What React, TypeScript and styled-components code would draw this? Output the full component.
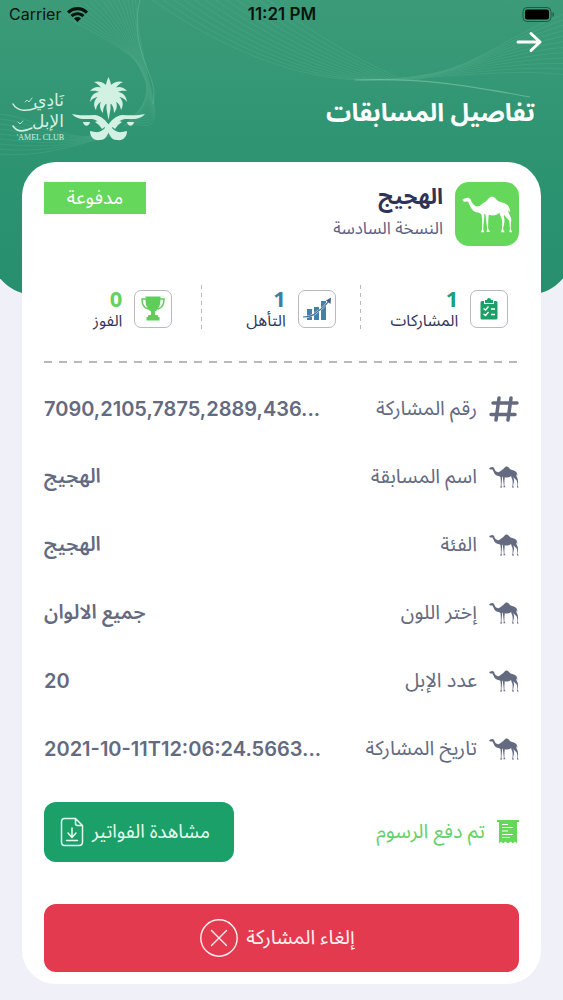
import React from "react";
import styled, { createGlobalStyle } from "styled-components";

const sans = `Inter, "Noto Sans", "DejaVu Sans", sans-serif`;
const arabic = `"Noto Sans Arabic", "Noto Sans", "DejaVu Sans", sans-serif`;

const GlobalStyle = createGlobalStyle`
  *, *::before, *::after { box-sizing: border-box; }
  body { margin: 0; background: #f0f0f8; font-family: ${arabic}; color: #646a80; }
  h1, h2, p, dl, dd, dt { margin: 0; font-weight: 400; }
  svg { display: block; flex: none; }
`;

const Page = styled.div`
  position: relative;
  overflow: hidden;
  padding-bottom: 17px;
`;

const Backdrop = styled.div`
  position: absolute;
  top: 0;
  left: -10px;
  right: -10px;
  height: 295px;
  border-radius: 0 0 45px 45px;
  background: linear-gradient(#3c9b79, #2e9472 50%, #268f6e);
  overflow: hidden;
`;

const Header = styled.header`
  position: relative;
  height: 162px;
`;

const StatusBar = styled.div`
  display: grid;
  grid-template-columns: 1fr auto 1fr;
  align-items: center;
  height: 28px;
  padding: 0 8px 0 9px;
  font: 400 16px/28px ${sans};
  color: #08130f;
`;

const Carrier = styled.div`
  display: flex;
  align-items: center;
  gap: 6px;
`;

const Clock = styled.div`
  font-size: 17px;
  font-weight: 600;
`;

const BatterySlot = styled.div`
  justify-self: end;
`;

const BackButton = styled.button`
  display: block;
  margin: 0 20px;
  padding: 0;
  border: 0;
  background: none;
  color: #fff;
  cursor: pointer;
`;

const TitleRow = styled.div`
  display: flex;
  justify-content: space-between;
  align-items: center;
  height: 66px;
  margin-top: 20px;
  padding: 0 28px 0 12px;
`;

const Title = styled.h1`
  padding-top: 8px;
  font-size: 25px;
  line-height: 36px;
  font-weight: 700;
  color: #fff;
`;

const Brand = styled.div`
  display: flex;
  align-items: center;
  gap: 8px;
  color: #d3f1e3;
`;

const Wordmark = styled.div`
  position: relative;
  display: flex;
  flex-direction: column;
  width: 52px;
  padding-top: 16px;
  font: 400 17px/21px "DejaVu Sans", sans-serif;
`;

const Flourish = styled.svg`
  position: absolute;
  left: 0;
  top: 20px;
`;

const WordmarkLatin = styled.span`
  direction: ltr;
  font: 400 8px/12px "Liberation Serif", serif;
  text-align: right;
  white-space: nowrap;
`;

const Card = styled.main`
  position: relative;
  margin: 0 22px;
  padding: 20px 22px 12px;
  border-radius: 34px;
  background: #fff;
`;

const Summary = styled.section`
  display: flex;
  align-items: flex-start;
  gap: 12px;
  height: 64px;
`;

const CamelTile = styled.div`
  display: grid;
  place-items: center;
  width: 64px;
  height: 64px;
  border-radius: 14px;
  background: #65d75b;
  color: #fff;
`;

const SummaryText = styled.div`
  flex: 1;
`;

const Name = styled.h2`
  font-size: 22px;
  line-height: 30px;
  font-weight: 700;
  color: #2e3358;
`;

const Edition = styled.p`
  font-size: 17px;
  line-height: 34px;
  color: #5c6184;
`;

const Badge = styled.span`
  width: 102px;
  background: #65d75b;
  color: #fff;
  font-size: 19px;
  line-height: 32px;
  text-align: center;
`;

const Stats = styled.section`
  display: grid;
  grid-template-columns: repeat(3, 1fr);
  margin-top: 39px;
`;

const dash = "#b9b9bd";

const Stat = styled.div`
  display: flex;
  align-items: center;
  justify-content: center;
  gap: 12px;
  height: 47px;
  padding-left: 19px;
  & + & {
    background: repeating-linear-gradient(${dash} 0 4px, transparent 4px 8px) right top / 1px 100% no-repeat;
  }
`;

const StatIcon = styled.div`
  display: grid;
  place-items: center;
  width: 38px;
  height: 38px;
  border: 1px solid #b9b9c0;
  border-radius: 7px;
`;

const StatNumber = styled.div<{ $color: string }>`
  font: 700 22px/24px "Noto Sans", sans-serif;
  color: ${(p) => p.$color};
`;

const StatLabel = styled.div`
  font-size: 16px;
  line-height: 22px;
  color: #33365a;
`;

const Divider = styled.div`
  height: 2px;
  margin: 29px 0 12px;
  background: repeating-linear-gradient(to right, ${dash} 0 8px, transparent 8px 15px);
`;

const Details = styled.dl``;

const Row = styled.div`
  display: flex;
  align-items: center;
  justify-content: space-between;
  height: 68px;
`;

const Term = styled.dt`
  display: flex;
  align-items: center;
  gap: 12px;
  font-size: 20px;
`;

const Value = styled.dd<{ $latin?: boolean }>`
  direction: ${(p) => (p.$latin ? "ltr" : "rtl")};
  font-family: ${(p) => (p.$latin ? sans : arabic)};
  font-size: 20px;
  font-weight: 600;
`;

const Payment = styled.section`
  display: flex;
  align-items: center;
  justify-content: space-between;
  margin: 19px 0 42px;
`;

const Paid = styled.p`
  display: flex;
  align-items: center;
  gap: 12px;
  font-size: 20px;
  color: #65d16a;
`;

const InvoiceButton = styled.button`
  display: flex;
  align-items: center;
  gap: 8px;
  width: 190px;
  height: 60px;
  padding: 0 24px;
  border: 0;
  border-radius: 12px;
  background: #1ba06a;
  color: #e4fbef;
  font: 400 19px/24px ${arabic};
  white-space: nowrap;
  cursor: pointer;
`;

const CancelButton = styled.button`
  display: flex;
  align-items: center;
  justify-content: center;
  gap: 8px;
  width: 100%;
  height: 68px;
  padding: 0 12px 0 4px;
  border: 0;
  border-radius: 12px;
  background: #e43a50;
  color: #fff0f2;
  font: 400 20px/26px ${arabic};
  cursor: pointer;
`;

const range = (n: number) => Array.from({ length: n }, (_, i) => i);

const Waves = () => (
  <svg width="573" height="162" viewBox="-10 0 573 162" fill="none" stroke="#8fd6b5" strokeWidth="0.7">
    <g opacity="0.2">
      {range(12).map((i) => (
        <path key={i} d={`M${140 + i * 9} ${-2 - i}C${190 + i * 8} ${34 - i * 2} ${270 + i * 4} ${78 - i * 3} ${350 + i * 4} 80`} />
      ))}
      {range(12).map((i) => (
        <path key={i} d={`M${350 + i * 5} 80C${430 + i * 3} ${80 - i} 500 ${66 - i * 3} 565 ${76 - i * 6}`} />
      ))}
      {range(16).map((i) => (
        <path key={i} d={`M${50 + i * 5} ${14 - i * 2}C${80 + i * 3} ${30 - i * 2} ${112 + i} ${48 - i} ${126 + i} ${60 + i * 2}S${140 - i} ${100 + i} ${128 - i} ${112 + i}`} />
      ))}
      {range(9).map((i) => (
        <path key={i} d={`M-10 ${114 + i * 5}C30 ${118 + i * 5} 70 ${152 - i} 100 ${128 + i}`} />
      ))}
    </g>
    <path d="M130 0C122 30 132 56 140 76C144 86 145 94 143 104" opacity="0.4" />
    <path d="M345 80C410 78 450 84 520 97" opacity="0.5" strokeWidth="1.2" />
  </svg>
);

const Camel = ({ width }: { width: number }) => (
  <svg width={width} height={Math.round(width * 0.73)} viewBox="428 107 154 112" fill="currentColor" aria-hidden="true">
    <path d="M429 118C433 114 438 115 441 113C446 111 451 113 454 117C457 128 464 138 475 139C483 138 489 130 496 126C504 122 508 111 516 109C525 107 531 118 539 124C549 127 563 129 569 139C572 145 573 150 574 156C570 153 569 150 568 149C567 160 575 166 577 179L575 207L580 217L571 217L573 207L571 182C565 174 559 171 555 164L554 170C560 182 553 195 552 208L557 217L546 217L549 206C549 194 551 184 547 174C544 167 543 163 541 158C531 168 519 167 509 164C507 177 507 191 507 206L513 216L502 216L504 205L501 181L499 163L495 161C496 178 492 192 492 207L495 217L485 217L489 207C488 193 490 180 487 164C484 158 478 157 471 156C457 153 453 139 446 124C440 124 435 126 431 122Z" />
  </svg>
);

const Emblem = () => (
  <svg width="73" height="64" viewBox="0 0 73 64" fill="currentColor" aria-hidden="true">
    <path d="M34.500 17L38.500 17L38.500 32L36.500 43L34.500 32Z" />
    {[
      "M33 18C33 11 34 5 36.500 0C39 5 40 11 40 18Z",
      "M34 20C30 13 29 8 22 5C29 3 36 7 39 16Z",
      "M39 20C43 13 44 8 51 5C44 3 37 7 34 16Z",
      "M35 22C30 15 25 13 18 14C24 7 33 10 38 18Z",
      "M38 22C43 15 48 13 55 14C49 7 40 10 35 18Z",
      "M36 24C30 18 22 19 18 25C19 14 30 12 38 18Z",
      "M37 24C43 18 51 19 55 25C54 14 43 12 35 18Z",
      "M37 25C30 22 25 26 24 33C19 25 25 16 37 17Z",
      "M36 25C43 22 48 26 49 33C54 25 48 16 36 17Z",
      "M37 25C34 26 31 29 31 36C25 29 29 20 37 18Z",
      "M36 25C39 26 42 29 42 36C48 29 44 20 36 18Z",
    ].map((d) => (
      <path key={d} d={d} />
    ))}
    <circle cx="36.500" cy="19" r="8" />
    {[undefined, "matrix(-1 0 0 1 73 0)"].map((t, i) => (
      <g key={i} transform={t}>
        <path d="M0 37C8 39 16 38 23 38C30 39 34 44 37 48C41 52 44 56 50 55L55 54C55 60 51 64 45 63C39 63 38 58 35 53C31 48 26 43 20 42C13 42 5 43 0 37Z" />
        <path d="M11 45H18C17 50 12 50 11 45Z" />
        <path d="M39 49C41 44 46 43 50 45L46 48L43 52Z" />
      </g>
    ))}
  </svg>
);

const WifiIcon = () => (
  <svg width="21" height="15" viewBox="0 0 21 15" fill="currentColor" aria-hidden="true">
    <path d="M0 4.4C6-1.4 15-1.4 21 4.4L18.8 6.7C14 2.2 7 2.2 2.200 6.700Z" />
    <path d="M3.500 7.900C7.500 4.200 13.500 4.200 17.500 7.900L15.300 10.200C12.500 7.700 8.500 7.700 5.700 10.200Z" />
    <path d="M7 11.400C9 9.600 12 9.600 14 11.400L10.500 15Z" />
  </svg>
);

const BatteryIcon = () => (
  <svg width="33" height="15" viewBox="0 0 33 15" aria-hidden="true">
    <rect x="1" y="0.5" width="28" height="14" rx="4" fill="none" stroke="#1d5b45" />
    <rect x="3" y="2.500" width="24" height="10" rx="2" fill="#000" />
    <path d="M30.500 5C32.500 6 32.500 9 30.500 10Z" fill="#1d5b45" />
  </svg>
);

const ArrowIcon = () => (
  <svg width="28" height="28" viewBox="0 0 28 28" fill="none" stroke="currentColor" strokeWidth="3" strokeLinecap="round" strokeLinejoin="round" aria-hidden="true">
    <path d="M3 14H25M16 5.500L25 14L16 22.500" />
  </svg>
);

const ClipboardIcon = () => (
  <svg width="18" height="22" viewBox="0 0 18 22" aria-hidden="true">
    <path d="M2 3H4V6H14V3H16Q17.500 3 17.500 4.500V20Q17.500 21.500 16 21.500H2Q.5 21.500.5 20V4.500Q.5 3 2 3Z" fill="#1ca068" />
    <path d="M5 2H7Q7 0 9 0T11 2H13V5H5Z" fill="#1ca068" />
    <path d="M3.500 10.500L5.500 12L8.500 8.500M3.500 16L5.500 17.500L8.500 14M11 11H15M11 16.500H15" fill="none" stroke="#fff" strokeWidth="1.300" />
  </svg>
);

const GrowthIcon = () => (
  <svg width="30" height="24" viewBox="0 0 30 24" aria-hidden="true">
    <path d="M5 12H10V23H5ZM12 10H17V23H12ZM19 4H24V23H19Z" fill="#4382a8" />
    <path d="M1 20C9 20 12 18 15 15C20 12 23 9 27 4" fill="none" stroke="#fff" strokeWidth="2" />
    <path d="M1 20C9 20 12 18 15 15C20 12 23 9 27 4" fill="none" stroke="#3c6f96" strokeWidth="1.200" />
    <path d="M29 0.500L28.500 7L24 3.500Z" fill="#3c5f8a" />
  </svg>
);

const TrophyIcon = () => (
  <svg width="24" height="25" viewBox="0 0 24 25" aria-hidden="true">
    <path d="M4.500 0.500H19.500V3C19.500 10 17 14 14 15.500V19H16Q17 19 17 20V21H18.500V24.500H5.500V21H7V20Q7 19 8 19H10V15.500C7 14 4.500 10 4.500 3Z" fill="#5dcf58" />
    <path d="M5 3H1C1 9 3 12 7 13M19 3H23C23 9 21 12 17 13" fill="none" stroke="#5dcf58" strokeWidth="1.500" />
  </svg>
);

const HashIcon = () => (
  <svg width="30" height="28" viewBox="0 0 30 28" fill="none" stroke="currentColor" strokeWidth="3.500" strokeLinecap="round" aria-hidden="true">
    <path d="M10 3L7 25M22 3L19 25M4 8H28M2 19.500H26" />
  </svg>
);

const ReceiptIcon = () => (
  <svg width="22" height="24" viewBox="0 0 22 24" aria-hidden="true">
    <path d="M0 0H22V2H20V23.500L18 21.500L16 23.500L13.500 21.500L11 23.500L8.500 21.500L6 23.500L4 21.500L2 23.500V2H0Z" fill="#65d75b" />
    <path d="M5 4.500H11M5 7.500H16M5 11H11M5 14.500H16M5 17.500H13" stroke="#fff" strokeWidth="1.200" />
  </svg>
);

const DownloadIcon = () => (
  <svg width="24" height="30" viewBox="0 0 24 30" fill="none" stroke="currentColor" strokeWidth="1.500" strokeLinecap="round" strokeLinejoin="round" aria-hidden="true">
    <path d="M4.500 1.500H15.500L22.500 8.500V25Q22.500 28.500 19 28.500H4.500Q1.500 28.500 1.500 25V5Q1.500 1.500 4.500 1.500ZM15.500 1.500V6.500Q15.500 8.500 17.500 8.500H22.500M12 11V20M8 16L12 20.500L16 16M6.500 23.500H17.500" />
  </svg>
);

const CloseCircleIcon = () => (
  <svg width="38" height="38" viewBox="0 0 38 38" fill="none" stroke="currentColor" strokeWidth="1.400" strokeLinecap="round" aria-hidden="true">
    <circle cx="19" cy="19" r="18.200" />
    <path d="M11.500 11.500L26.500 26.500M26.500 11.500L11.500 26.500" />
  </svg>
);

const stats = [
  { label: "المشاركات", value: 1, color: "#1ca07a", icon: <ClipboardIcon /> },
  { label: "التأهل", value: 1, color: "#3c7f9f", icon: <GrowthIcon /> },
  { label: "الفوز", value: 0, color: "#62d35c", icon: <TrophyIcon /> },
];

const details = [
  { label: "رقم المشاركة", value: "7090,2105,7875,2889,436...", latin: true, icon: <HashIcon /> },
  { label: "اسم المسابقة", value: "الهجيج" },
  { label: "الفئة", value: "الهجيج" },
  { label: "إختر اللون", value: "جميع الالوان" },
  { label: "عدد الإبل", value: "20", latin: true },
  { label: "تاريخ المشاركة", value: "2021-10-11T12:06:24.5663...", latin: true },
];

export default function App() {
  return (
    <Page dir="rtl" lang="ar">
      <GlobalStyle />
      <Backdrop>
        <Waves />
      </Backdrop>
      <Header>
        <StatusBar dir="ltr">
          <Carrier>
            Carrier <WifiIcon />
          </Carrier>
          <Clock>11:21 PM</Clock>
          <BatterySlot>
            <BatteryIcon />
          </BatterySlot>
        </StatusBar>
        <BackButton type="button" aria-label="رجوع">
          <ArrowIcon />
        </BackButton>
        <TitleRow>
          <Title>تفاصيل المسابقات</Title>
          <Brand>
            <Emblem />
            <Wordmark>
              <Flourish width="52" height="42" viewBox="0 0 52 42" fill="none" stroke="currentColor" strokeLinecap="round" aria-hidden="true">
                <path d="M1 10C5 17 14 18 24 14M1 32C5 38 12 38 20 34" strokeWidth="1.500" />
                <path d="M13 8L15 6L17 8L20 4M6 28L8 30L11 27" strokeWidth="0.800" />
              </Flourish>
              <span>نَادِي</span>
              <span>الإبل</span>
              <WordmarkLatin>'AMEL CLUB</WordmarkLatin>
            </Wordmark>
          </Brand>
        </TitleRow>
      </Header>
      <Card>
        <Summary>
          <CamelTile>
            <Camel width={51} />
          </CamelTile>
          <SummaryText>
            <Name>الهجيج</Name>
            <Edition>النسخة السادسة</Edition>
          </SummaryText>
          <Badge>مدفوعة</Badge>
        </Summary>
        <Stats>
          {stats.map((s) => (
            <Stat key={s.label}>
              <StatIcon>{s.icon}</StatIcon>
              <div>
                <StatNumber $color={s.color}>{s.value}</StatNumber>
                <StatLabel>{s.label}</StatLabel>
              </div>
            </Stat>
          ))}
        </Stats>
        <Divider />
        <Details>
          {details.map((d) => (
            <Row key={d.label}>
              <Term>
                {d.icon ?? <Camel width={30} />}
                {d.label}
              </Term>
              <Value $latin={d.latin}>{d.value}</Value>
            </Row>
          ))}
        </Details>
        <Payment>
          <Paid>
            <ReceiptIcon />
            تم دفع الرسوم
          </Paid>
          <InvoiceButton type="button">
            مشاهدة الفواتير
            <DownloadIcon />
          </InvoiceButton>
        </Payment>
        <CancelButton type="button">
          إلغاء المشاركة
          <CloseCircleIcon />
        </CancelButton>
      </Card>
    </Page>
  );
}
